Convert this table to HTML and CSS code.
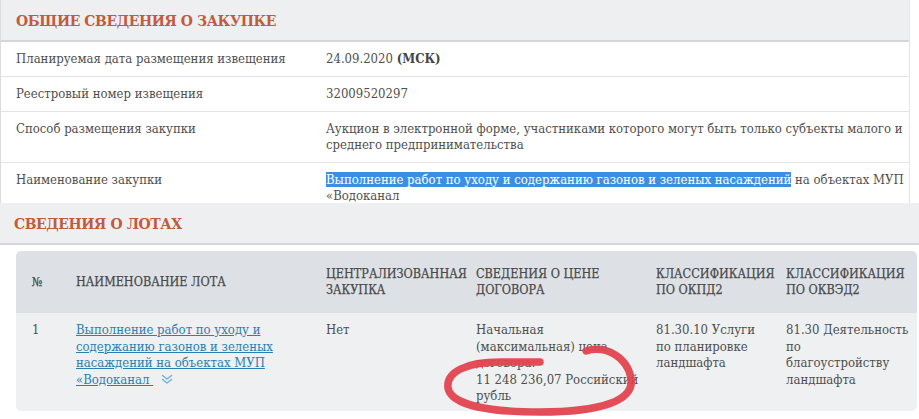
FILE: index.html
```html
<!DOCTYPE html>
<html lang="ru">
<head>
<meta charset="utf-8">
<title>Сведения о закупке</title>
<link rel="stylesheet" href="styles.css">
</head>
<body>
<div class="page">
  <section class="panel general">
    <div class="panel-head"><h2 class="panel-title">ОБЩИЕ СВЕДЕНИЯ О ЗАКУПКЕ</h2></div>
    <div class="info">
      <div class="info-row">
        <div class="info-label">Планируемая дата размещения извещения</div>
        <div class="info-value">24.09.2020 <b>(МСК)</b></div>
      </div>
      <div class="info-row">
        <div class="info-label">Реестровый номер извещения</div>
        <div class="info-value">32009520297</div>
      </div>
      <div class="info-row">
        <div class="info-label">Способ размещения закупки</div>
        <div class="info-value">Аукцион в электронной форме, участниками которого могут быть только субъекты малого и среднего предпринимательства</div>
      </div>
      <div class="info-row">
        <div class="info-label">Наименование закупки</div>
        <div class="info-value"><span class="selected">Выполнение работ по уходу и содержанию газонов и зеленых насаждений</span> на объектах МУП «Водоканал</div>
      </div>
    </div>
  </section>
  <section class="panel lots">
    <div class="panel-head"><h2 class="panel-title">СВЕДЕНИЯ О ЛОТАХ</h2></div>
    <div class="lots-wrap">
      <table class="lots-table">
        <thead>
          <tr>
            <th class="c-num">№</th>
            <th class="c-name">НАИМЕНОВАНИЕ ЛОТА</th>
            <th class="c-central">ЦЕНТРАЛИЗОВАННАЯ ЗАКУПКА</th>
            <th class="c-price">СВЕДЕНИЯ О ЦЕНЕ ДОГОВОРА</th>
            <th class="c-okpd">КЛАССИФИКАЦИЯ ПО ОКПД2</th>
            <th class="c-okved">КЛАССИФИКАЦИЯ ПО ОКВЭД2</th>
          </tr>
        </thead>
        <tbody>
          <tr>
            <td>1</td>
            <td><a class="lot-link" href="#">Выполнение работ по уходу и содержанию газонов и зеленых насаждений на объектах МУП «Водоканал </a><svg class="chev" width="12" height="11" viewBox="0 0 12 11"><path d="M1.5 1.5 L6 5 L10.5 1.5 M1.5 5.5 L6 9 L10.5 5.5" fill="none" stroke="#6fb0d8" stroke-width="1.4" stroke-linecap="round" stroke-linejoin="round"/></svg></td>
            <td>Нет</td>
            <td>Начальная (максимальная) цена договора:<br><span class="nowrap">11 248 236,07 Российский</span> рубль</td>
            <td>81.30.10 Услуги по планировке ландшафта</td>
            <td><span class="nowrap">81.30 Деятельность</span> по благоустройству ландшафта</td>
          </tr>
        </tbody>
      </table>
      <svg class="scribble" width="919" height="419" viewBox="0 0 919 419">
        <path d="M586 351 C606 345 627 357 631 378 C635 401 600 412 540 412 C490 412 451 405 448 388 C446 372 466 362 500 362 L540 362" fill="none" stroke="#e2434f" stroke-width="7.5" stroke-linecap="round" stroke-linejoin="round" opacity="0.95"/>
      </svg>
    </div>
  </section>
</div>
</body>
</html>
```

FILE: styles.css
```css
* { box-sizing: border-box; }
html, body { margin: 0; padding: 0; background: #fff; }
body {
  font-family: "DejaVu Serif Condensed", "DejaVu Serif", serif;
  font-stretch: condensed;
  font-size: 13px;
  color: #4f4f4f;
  width: 919px;
  height: 419px;
  overflow: hidden;
  position: relative;
}
.page { display: flex; flex-direction: column; }
.panel-head {
  height: 42px;
  background: #eeeff1;
  border-bottom: 2px solid #d6d6d6;
  display: flex;
  align-items: center;
  padding-left: 16px;
}
.panel-title {
  margin: 0;
  font-size: 15.5px;
  font-weight: bold;
  color: #c25a3c;
  letter-spacing: -0.4px;
}
.general {
  width: 910px;
  height: 203px;
  overflow: hidden;
  border-left: 1px solid #dcdcdc;
  border-right: 1px solid #e6e6e6;
}
.general .panel-head { padding-left: 15px; }
.info-row {
  display: flex;
  border-bottom: 1px solid #e3e3e3;
  padding: 9px 0;
  line-height: 16px;
}
.info-label { width: 325px; padding-left: 15px; flex: none; }
.info-value { flex: 1; padding-right: 4px; }
.info-value b { font-weight: bold; color: #444; }
.selected { background: #3b8ee4; color: #fff; }
.lots .panel-head { padding-left: 14px; }
.lots-wrap { padding: 6px 2px 0 16px; }
.lots-table {
  width: 901px;
  border-collapse: separate;
  border-spacing: 0;
  table-layout: fixed;
}
.lots-table th, .lots-table td {
  text-align: left;
  padding: 0 4px 0 16px;
  line-height: 16.5px;
}
.lots-table th {
  background: #dde1e6;
  height: 62px;
  vertical-align: middle;
  font-size: 12.5px;
  font-weight: normal;
  color: #4a4a4a;
  -webkit-text-stroke: 0.25px #4a4a4a;
}
.lots-table th:first-child { border-top-left-radius: 5px; }
.lots-table th:last-child { border-top-right-radius: 5px; }
.lots-table td {
  background: #eef0f2;
  vertical-align: top;
  padding-top: 9px;
  padding-bottom: 6px;
}
.lots-table td:first-child { border-bottom-left-radius: 5px; }
.lots-table td:last-child { border-bottom-right-radius: 5px; }
.lots-table td:last-child, .lots-table th:last-child { padding-right: 22px; }
.c-num { width: 44px; }
.c-name { width: 250px; }
.c-central { width: 150px; }
.c-price { width: 180px; }
.c-okpd { width: 130px; }
.c-okved { width: 147px; }
.nowrap { white-space: nowrap; }
.lot-link { color: #2a7fae; text-decoration: underline; }
.chev { vertical-align: -1px; margin-left: 8px; }
.scribble { position: absolute; left: 0; top: 0; pointer-events: none; }
```
